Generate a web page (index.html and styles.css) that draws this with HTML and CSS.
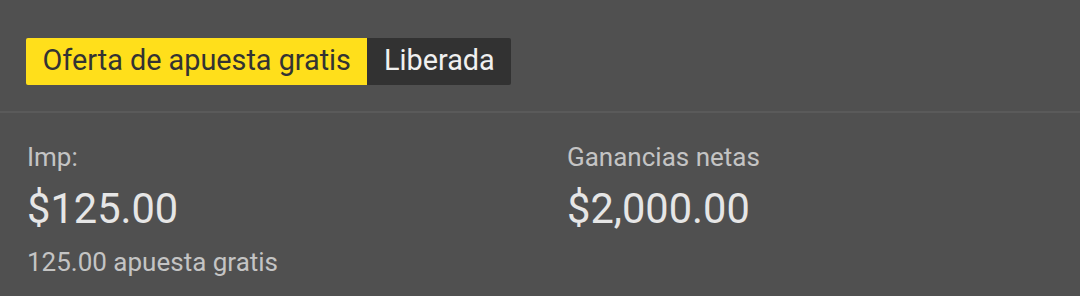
FILE: index.html
```html
<!DOCTYPE html>
<html>
<head>
<meta charset="utf-8">
<link rel="stylesheet" href="styles.css">
</head>
<body>
<div class="page">
  <div class="header">
    <div class="badge">
      <span class="badge-offer">Oferta de apuesta gratis</span>
      <span class="badge-status">Liberada</span>
    </div>
  </div>
  <div class="details">
    <div class="col">
      <div class="label">Imp:</div>
      <div class="amount">$125.00</div>
      <div class="note">125.00 apuesta gratis</div>
    </div>
    <div class="col">
      <div class="label">Ganancias netas</div>
      <div class="amount">$2,000.00</div>
    </div>
  </div>
</div>
</body>
</html>
```
FILE: styles.css
```css
html, body {
  margin: 0;
  padding: 0;
  background: #505050;
}
body {
  width: 1080px;
  height: 296px;
  overflow: hidden;
  font-family: Roboto, "Liberation Sans", sans-serif;
}
.header {
  padding: 38px 26px 26px;
  border-bottom: 2px solid #5a5a5a;
}
.badge {
  display: inline-flex;
  height: 47px;
  border-radius: 2px;
  overflow: hidden;
}
.badge-offer, .badge-status {
  display: flex;
  align-items: center;
  font-size: 28.8px;
  padding: 0 16.5px 4px;
}
.badge-offer {
  background: #ffdf1b;
  color: #333333;
}
.badge-status {
  background: #323232;
  color: #f0f0f0;
}
.details {
  display: grid;
  grid-template-columns: 540px 540px;
  padding-top: 29px;
}
.col {
  padding-left: 27px;
}
.label {
  font-size: 26px;
  color: #c4c4c4;
  line-height: 30px;
}
.amount {
  font-size: 41.6px;
  color: #e6e6e6;
  line-height: 56px;
  margin-top: 9px;
}
.note {
  font-size: 26px;
  color: #c4c4c4;
  line-height: 30px;
  margin-top: 10px;
}
```
